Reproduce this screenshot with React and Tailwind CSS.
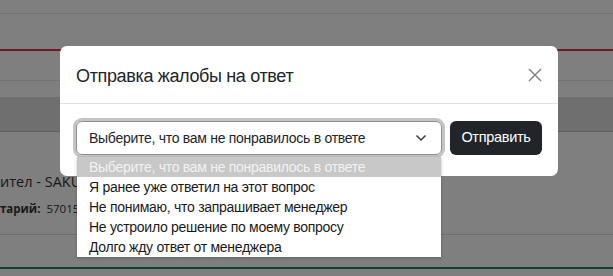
import React from "react";

const OPTIONS = [
  "Выберите, что вам не понравилось в ответе",
  "Я ранее уже ответил на этот вопрос",
  "Не понимаю, что запрашивает менеджер",
  "Не устроило решение по моему вопросу",
  "Долго жду ответ от менеджера",
];

export default function App() {
  return (
    <div className="relative w-[613px] h-[276px] overflow-hidden bg-white font-['Liberation_Sans',sans-serif]">
      {/* page under the backdrop */}
      <div className="flex flex-col">
        <div className="h-[13px]" />
        <div className="h-px bg-[#e6e6e6]" />
        <div className="h-[35px]" />
        <div className="h-[2px] bg-[#dc3545]" />
        <div className="h-[29px]" />
        <div className="h-px bg-[#e6e6e6]" />
        <div className="h-[16px]" />
        <div className="h-[35px] bg-[#dedede] border-b border-[#bdbdbd]" />
        <div className="flex flex-col pt-[40px] h-[102px] w-[77px] font-['Open_Sans',sans-serif] text-[#333]">
          <div className="text-[14.5px] leading-[20px] whitespace-nowrap">ител - SAKU</div>
          <div className="text-[11.5px] leading-[16px] mt-[9px] whitespace-nowrap">
            <span className="font-bold">тарий:</span>
            <span className="ml-[6px]">57015</span>
          </div>
        </div>
        <div className="h-px bg-[#dedede]" />
        <div className="h-[32px]" />
        <div className="h-[2px] bg-[#198754]" />
        <div className="flex-1 h-[10px] bg-[#f0f0f0]" />
      </div>

      {/* backdrop */}
      <div className="absolute inset-0 bg-black/50" />

      {/* modal */}
      <div className="absolute left-[60px] top-[46px] w-[498px] bg-white rounded-[7px] text-[#212529]">
        <div className="flex items-center justify-between h-[58px] px-4 border-b border-[#dee2e6]">
          <h5 className="text-[18px] leading-[24px] pt-[2px] tracking-[-0.35px]">Отправка жалобы на ответ</h5>
          <button className="w-[24px] h-[24px] flex items-center justify-center text-[#7d7d7d] -mr-[5px]">
            <svg width="14" height="14" viewBox="0 0 14 14" fill="none" stroke="currentColor" strokeWidth="1.4">
              <path d="M1 1L13 13M13 1L1 13" />
            </svg>
          </button>
        </div>
        <div className="flex gap-2 px-4 pt-[17px] pb-[21px]">
          <div className="relative flex-1">
            <div className="flex items-center h-[34px] pl-[12px] pr-[14px] border border-[#8f8f8f] rounded-[6px] shadow-[0_0_0_3px_#c4c4c4] text-[14px] tracking-[-0.28px]">
              <span className="flex-1 whitespace-nowrap">Выберите, что вам не понравилось в ответе</span>
              <svg width="12" height="8" viewBox="0 0 12 8" fill="none" stroke="#343a40" strokeWidth="1.5">
                <path d="M1.5 1.5L6 6L10.5 1.5" />
              </svg>
            </div>
            <div className="absolute left-[1px] right-[1px] top-[36px] bg-white shadow-[0_1px_3px_rgba(0,0,0,0.25)] text-[14px] tracking-[-0.28px] z-10">
              {OPTIONS.map((opt, i) => (
                <div
                  key={opt}
                  className={
                    i === 0
                      ? "h-[20px] leading-[20px] pl-[12px] bg-[#c8c8c8] text-[#f2f2f2] whitespace-nowrap"
                      : "h-[20px] leading-[20px] pl-[12px] text-[#1a1a1a] whitespace-nowrap"
                  }
                >
                  {opt}
                </div>
              ))}
            </div>
          </div>
          <button className="h-[34px] w-[92px] bg-[#212529] text-white rounded-[6px] text-[14.5px] tracking-[-0.3px]">
            Отправить
          </button>
        </div>
      </div>
    </div>
  );
}
